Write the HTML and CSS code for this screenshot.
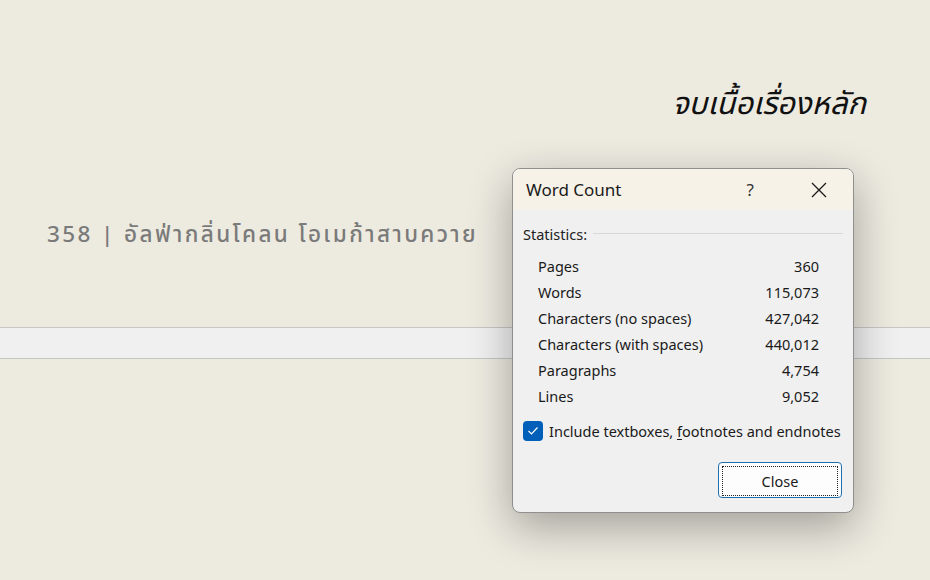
FILE: index.html
```html
<!DOCTYPE html>
<html lang="th">
<head>
  <meta charset="UTF-8">
  <title>Word Count</title>
  <link rel="stylesheet" href="styles.css">
</head>
<body>
  <div class="page">
    <div class="chapter-end">จบเนื้อเรื่องหลัก</div>
    <div class="footer-line">358 | อัลฟ่ากลิ่นโคลน โอเมก้าสาบควาย</div>
  </div>
  <div class="page-gap"></div>

  <!-- Word Count dialog -->
  <div class="dialog">
    <div class="dialog-title">
      <span class="title-text">Word Count</span>
      <span class="help">?</span>
      <svg class="close-x" width="18" height="18" viewBox="0 0 18 18">
        <path d="M2 2 L16 16 M16 2 L2 16" stroke="#1a1a1a" stroke-width="1.3" fill="none"/>
      </svg>
    </div>
    <div class="dialog-body">
      <div class="group-label"><span>Statistics:</span><div class="rule"></div></div>
      <table class="stats">
        <tr><td>Pages</td><td>360</td></tr>
        <tr><td>Words</td><td>115,073</td></tr>
        <tr><td>Characters (no spaces)</td><td>427,042</td></tr>
        <tr><td>Characters (with spaces)</td><td>440,012</td></tr>
        <tr><td>Paragraphs</td><td>4,754</td></tr>
        <tr><td>Lines</td><td>9,052</td></tr>
      </table>
      <label class="check">
        <span class="box">
          <svg width="12" height="10" viewBox="0 0 12 10"><path d="M1.5 5 L4.5 8 L10.5 1.5" stroke="#fff" stroke-width="1.2" fill="none"/></svg>
        </span>
        <span>Include textboxes, <u>f</u>ootnotes and endnotes</span>
      </label>
      <div class="actions">
        <button class="close-btn"><span>Close</span></button>
      </div>
    </div>
  </div>
</body>
</html>
```

FILE: styles.css
```css
body {
  margin: 0;
  background-color: #EDEAE0;
  font-family: "Noto Sans Thai", "Noto Sans", "DejaVu Sans", sans-serif;
  width: 930px;
  height: 580px;
  overflow: hidden;
  position: relative;
}
.page {
  height: 327px;
  position: relative;
}
.chapter-end {
  padding-top: 84px;
  padding-right: 64px;
  text-align: right;
  font-size: 31px;
  font-style: italic;
  color: #111;
  line-height: 42px;
}
.footer-line {
  margin-top: 94px;
  padding-left: 47px;
  font-size: 22.5px;
  font-weight: 500;
  color: #7a7a7a;
  letter-spacing: 2.4px;
  line-height: 30px;
}
.page-gap {
  height: 30px;
  background-color: #F0F0F0;
  border-top: 1px solid #C6C6C2;
  border-bottom: 1px solid #C6C6C2;
}
.dialog {
  position: absolute;
  left: 512px;
  top: 168px;
  width: 340px;
  height: 343px;
  border: 1px solid #8F8F8F;
  border-radius: 8px;
  background-color: #F0F0F0;
  box-shadow: 0 14px 44px rgba(0, 0, 0, 0.32);
  overflow: hidden;
  font-family: "Noto Sans", "Open Sans", sans-serif;
  color: #1a1a1a;
}
.dialog-title {
  height: 41px;
  background-color: #F6F2E7;
  display: flex;
  align-items: center;
  padding-left: 13px;
}
.title-text {
  font-size: 17px;
  flex: 1;
}
.help {
  font-size: 17px;
  color: #333;
  margin-right: 56px;
}
.close-x {
  margin-right: 25px;
}
.dialog-body {
  padding: 14px 10px 0 10px;
}
.group-label {
  display: flex;
  align-items: center;
  font-size: 14.5px;
  color: #222;
}
.rule {
  flex: 1;
  height: 1px;
  background-color: #D8D8D8;
  margin-left: 6px;
  margin-top: -2px;
}
.stats {
  width: 281px;
  margin-left: 15px;
  margin-top: 9px;
  border-collapse: collapse;
  font-size: 14.5px;
}
.stats td {
  height: 26px;
  padding: 0;
}
.stats td:last-child {
  text-align: right;
}
.check {
  display: flex;
  align-items: center;
  margin-top: 12px;
  font-size: 14.5px;
}
.check u {
  text-underline-offset: 2px;
}
.box {
  width: 20px;
  height: 20px;
  border-radius: 4px;
  background-color: #005FB8;
  display: flex;
  align-items: center;
  justify-content: center;
  margin-right: 6px;
}
.actions {
  display: flex;
  justify-content: flex-end;
  margin-top: 21px;
  padding-right: 1px;
}
.close-btn {
  width: 124px;
  height: 36px;
  border: 1px solid #1E6FB0;
  border-radius: 4px;
  background-color: #FDFDFD;
  padding: 3px;
  font-family: "Noto Sans", "Open Sans", sans-serif;
  font-size: 14.5px;
  color: #1a1a1a;
}
.close-btn span {
  display: flex;
  height: 100%;
  align-items: center;
  justify-content: center;
  border: 1px dotted #222;
}
```
